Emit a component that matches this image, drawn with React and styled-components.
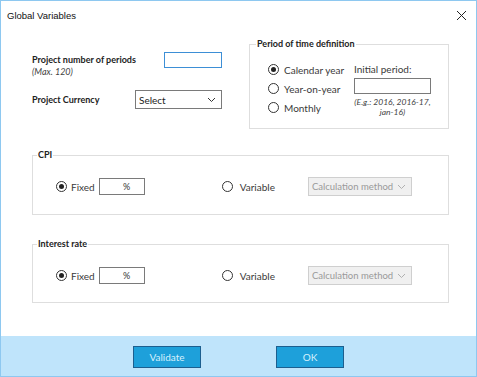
import React from 'react'
import styled, { createGlobalStyle } from 'styled-components'

const GlobalStyle = createGlobalStyle`
  body {
    margin: 0;
    background: #fff;
  }
`

const Window = styled.div`
  width: 477px;
  height: 377px;
  box-sizing: border-box;
  border: 1px solid #8ec8f0;
  display: flex;
  flex-direction: column;
  font-family: Lato, 'Open Sans', sans-serif;
  font-size: 10px;
  color: #3a3a3a;
  background: #fff;
`

const TitleBar = styled.div`
  height: 29px;
  display: flex;
  align-items: center;
  justify-content: space-between;
  padding: 0 9px 0 6px;
  font-family: 'Liberation Sans', Arial, sans-serif;
  font-size: 9.5px;
  color: #111;
`

const Body = styled.div`
  flex: 1;
  padding: 7px 27px 0 31px;
  display: flex;
  flex-direction: column;
`

const TopSection = styled.div`
  display: flex;
`

const LeftColumn = styled.div`
  flex: 1;
  padding-top: 15px;
  display: flex;
  flex-direction: column;
  gap: 13px;
`

const FieldRow = styled.div`
  width: 190px;
  display: flex;
  justify-content: space-between;
  align-items: ${({ top }) => (top ? 'flex-start' : 'center')};
`

const LabelBlock = styled.div`
  display: flex;
  flex-direction: column;
  margin-top: ${({ top }) => (top ? '1px' : '0')};
`

const BoldLabel = styled.span`
  font-weight: 700;
  font-size: 9px;
  line-height: 14px;
  color: #222;
`

const Hint = styled.span`
  font-style: italic;
  font-size: ${({ size }) => size || 8.5}px;
  line-height: 10px;
  color: #444;
  text-align: ${({ center }) => (center ? 'center' : 'left')};
  white-space: nowrap;
`

const TextBox = styled.div`
  box-sizing: border-box;
  width: ${({ w }) => w}px;
  height: ${({ h }) => h || 16}px;
  margin-left: ${({ ml }) => ml || 0}px;
  border: 1px solid ${({ focus }) => (focus ? '#3d8fd6' : '#7a7a7a')};
  background: #fff;
  display: flex;
  align-items: center;
  justify-content: center;
  padding-left: ${({ pad }) => pad || 0}px;
  font-size: 9px;
  color: #333;
  flex-shrink: 0;
`

const SelectBox = styled.div`
  box-sizing: border-box;
  width: ${({ w }) => w}px;
  height: 19px;
  margin-left: ${({ ml }) => ml || 0}px;
  border: 1px solid ${({ disabled }) => (disabled ? '#cfcfcf' : '#7a7a7a')};
  background: ${({ disabled }) => (disabled ? '#f0f0f0' : '#fff')};
  color: ${({ disabled }) => (disabled ? '#9a9a9a' : '#222')};
  display: flex;
  align-items: center;
  justify-content: space-between;
  padding: 0 5px 0 3px;
  white-space: nowrap;
  font-size: ${({ disabled }) => (disabled ? '9.5px' : '10px')};
  flex-shrink: 0;
`

const GroupBox = styled.fieldset`
  margin: 0;
  border: 1px solid #dedede;
  box-sizing: border-box;
  width: ${({ w }) => (w ? `${w}px` : 'auto')};
  height: ${({ h }) => h}px;
  margin-top: ${({ mt }) => mt || 0}px;
  padding: ${({ pad }) => pad};
`

const Legend = styled.legend`
  font-weight: 700;
  font-size: 9px;
  line-height: 14px;
  color: #222;
  padding: 0 1px;
  margin-left: ${({ ml }) => ml || 0}px;
`

const PeriodContent = styled.div`
  display: flex;
`

const RadioList = styled.div`
  width: 86px;
  display: flex;
  flex-direction: column;
`

const RadioRow = styled.label`
  display: flex;
  align-items: center;
  gap: ${({ gap }) => gap || 5}px;
  height: 19px;
  margin-left: ${({ ml }) => ml || 0}px;
  flex-shrink: 0;
`

const RadioCircle = styled.span`
  box-sizing: border-box;
  width: 11px;
  height: 11px;
  border-radius: 50%;
  border: 1px solid #333;
  display: flex;
  align-items: center;
  justify-content: center;
  flex-shrink: 0;
  &::after {
    content: '';
    width: 5px;
    height: 5px;
    border-radius: 50%;
    background: ${({ checked }) => (checked ? '#222' : 'transparent')};
  }
`

const InitialPeriod = styled.div`
  display: flex;
  flex-direction: column;
  padding-top: 3px;
  gap: 3px;
  width: 77px;
`

const RateRow = styled.div`
  display: flex;
  align-items: center;
  height: 19px;
`

const Footer = styled.div`
  height: 40px;
  background: #bfe4fb;
  display: flex;
  align-items: center;
  justify-content: center;
  gap: 75px;
`

const Button = styled.button`
  width: 68px;
  height: 22px;
  margin-top: 1px;
  background: #1ea0da;
  border: 1px solid #1d5f8f;
  color: #d6f1fd;
  font-family: Lato, sans-serif;
  font-size: 10px;
  padding: 0;
`

const Chevron = ({ color }) => (
  <svg width="9" height="6" viewBox="0 0 9 6">
    <path d="M1 1l3.5 3.5L8 1" fill="none" stroke={color} strokeWidth="1" />
  </svg>
)

const Radio = ({ label, checked, ml, gap }) => (
  <RadioRow ml={ml} gap={gap}>
    <RadioCircle checked={checked} />
    {label}
  </RadioRow>
)

const RateGroup = ({ title, h, mt }) => (
  <GroupBox h={h} mt={mt} pad="15px 0 0 23px">
    <Legend ml={-19}>{title}</Legend>
    <RateRow>
      <Radio label="Fixed" checked gap={4} />
      <TextBox w={46} h={17} ml={4} pad={10}>
        %
      </TextBox>
      <Radio label="Variable" ml={77} gap={7} />
      <SelectBox w={104} ml={33} disabled>
        Calculation method
        <Chevron color="#b0b0b0" />
      </SelectBox>
    </RateRow>
  </GroupBox>
)

export default function App() {
  return (
    <>
      <GlobalStyle />
      <Window>
        <TitleBar>
          Global Variables
          <svg width="11" height="11" viewBox="0 0 11 11">
            <path d="M1 1l9 9M10 1l-9 9" stroke="#222" strokeWidth="1" />
          </svg>
        </TitleBar>
        <Body>
          <TopSection>
            <LeftColumn>
              <FieldRow top>
                <LabelBlock top>
                  <BoldLabel>Project number of periods</BoldLabel>
                  <Hint size={9}>(Max. 120)</Hint>
                </LabelBlock>
                <TextBox w={58} focus />
              </FieldRow>
              <FieldRow>
                <BoldLabel>Project Currency</BoldLabel>
                <SelectBox w={87}>
                  Select
                  <Chevron color="#333" />
                </SelectBox>
              </FieldRow>
            </LeftColumn>
            <GroupBox w={200} h={92} pad="9px 0 0 18px">
              <Legend ml={-12}>Period of time definition</Legend>
              <PeriodContent>
                <RadioList>
                  <Radio label="Calendar year" checked />
                  <Radio label="Year-on-year" />
                  <Radio label="Monthly" />
                </RadioList>
                <InitialPeriod>
                  <span>Initial period:</span>
                  <TextBox w={77} />
                  <Hint center>
                    (E.g.: 2016, 2016-17,
                    <br />
                    jan-16)
                  </Hint>
                </InitialPeriod>
              </PeriodContent>
            </GroupBox>
          </TopSection>
          <RateGroup title="CPI" h={67} mt={19} />
          <RateGroup title="Interest rate" h={66} mt={22} />
        </Body>
        <Footer>
          <Button>Validate</Button>
          <Button>OK</Button>
        </Footer>
      </Window>
    </>
  )
}
